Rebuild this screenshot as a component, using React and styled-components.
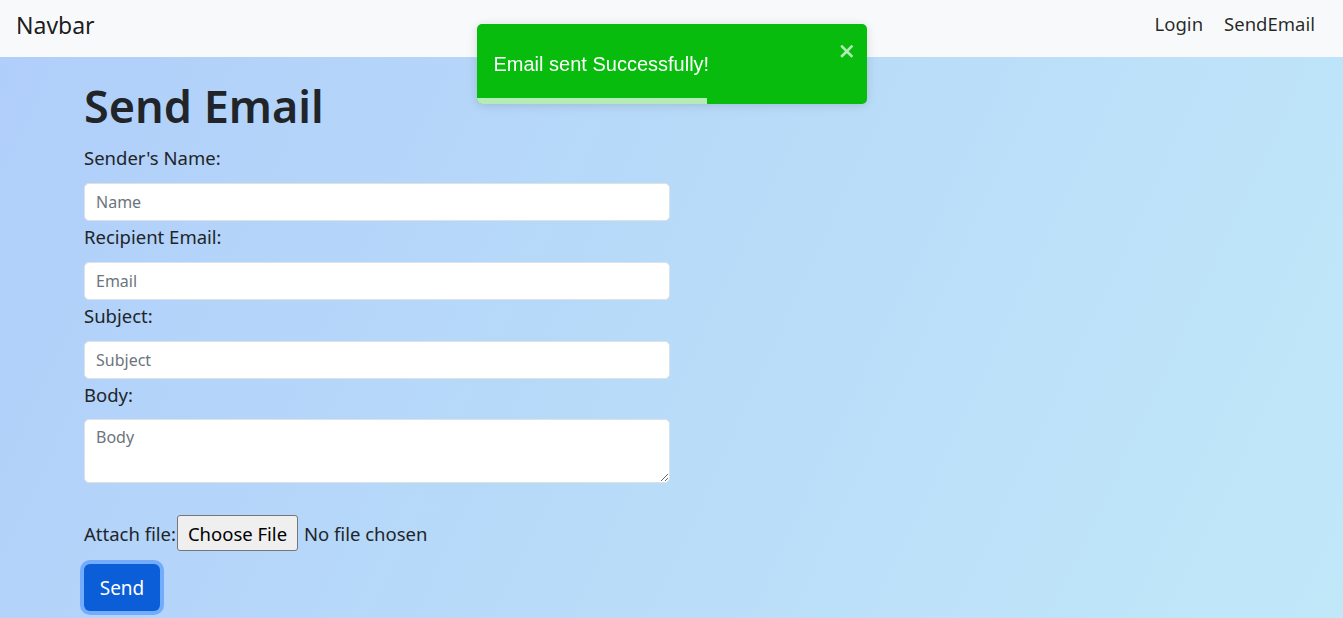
import * as React from 'react';
import styled, { createGlobalStyle } from 'styled-components';

const GlobalStyle = createGlobalStyle`
  html, body {
    margin: 0;
    padding: 0;
  }
  body {
    min-height: 100vh;
    font-family: "Noto Sans", "Open Sans", sans-serif;
    color: #212529;
    background: linear-gradient(115deg, #b0cefa 0%, #b8dbf9 50%, #c1e8f9 100%);
    background-attachment: fixed;
  }
  * {
    box-sizing: border-box;
  }
`;

const Navbar = styled.nav`
  height: 57px;
  display: flex;
  align-items: center;
  justify-content: space-between;
  padding: 0 28px 10px 16px;
  background: #f8f9fa;
`;

const Brand = styled.a`
  font-size: 23px;
  color: rgba(0, 0, 0, 0.9);
  text-decoration: none;
  margin-top: 2px;
`;

const NavLinks = styled.div`
  display: flex;
  gap: 21px;
`;

const NavLink = styled.a`
  font-size: 18.5px;
  color: rgba(0, 0, 0, 0.85);
  text-decoration: none;
`;

const Main = styled.main`
  padding: 21px 0 30px 84px;
`;

const Title = styled.h1`
  margin: 0 0 12px;
  font-size: 45px;
  line-height: 56px;
  font-weight: 600;
  color: #212529;
`;

const Form = styled.form`
  width: 586px;
  display: flex;
  flex-direction: column;
`;

const Label = styled.label`
  display: block;
  font-size: 18.5px;
  line-height: 24px;
  margin-bottom: ${p => (p.$tight ? 12 : 13)}px;
`;

const Input = styled.input`
  display: block;
  width: 100%;
  height: 38px;
  margin-bottom: 4px;
  padding: 0 11px;
  font-family: "Noto Sans", sans-serif;
  font-size: 16px;
  color: #212529;
  background: #fff;
  border: 1px solid #dee2e6;
  border-radius: 5px;
  outline: none;

  &::placeholder {
    color: #6c757d;
  }
`;

const TextArea = styled.textarea`
  display: block;
  width: 100%;
  height: 64px;
  padding: 5px 11px;
  font-family: "Noto Sans", sans-serif;
  font-size: 16px;
  line-height: 24px;
  background: #fff;
  border: 1px solid #dee2e6;
  border-radius: 5px;
  outline: none;
  resize: vertical;

  &::placeholder {
    color: #6c757d;
  }
`;

const FileRow = styled.div`
  display: flex;
  align-items: center;
  margin-top: 32px;
  font-size: 18.5px;
`;

const FileButton = styled.span`
  display: inline-flex;
  align-items: center;
  justify-content: center;
  width: 121px;
  height: 36px;
  margin-left: 1px;
  background: #efefef;
  border: 1px solid #767676;
  border-radius: 3px;
  color: #000;
`;

const FileStatus = styled.span`
  margin-left: 6px;
`;

const SendButton = styled.button`
  align-self: flex-start;
  margin-top: 13px;
  width: 76px;
  height: 47px;
  padding: 0;
  font-family: "Noto Sans", sans-serif;
  font-size: 19px;
  color: #fff;
  background: #0b5ed7;
  border: none;
  border-radius: 6px;
  box-shadow: 0 0 0 4px rgba(49, 132, 253, 0.5);
  cursor: pointer;
`;

const Toast = styled.div`
  position: fixed;
  top: 24px;
  left: 50%;
  transform: translateX(-50%);
  width: 390px;
  height: 80px;
  display: flex;
  padding: 10px;
  background: #07bc0c;
  border-radius: 5px;
  overflow: hidden;
  box-shadow: 0 1px 10px rgba(0, 0, 0, 0.1), 0 2px 15px rgba(0, 0, 0, 0.05);
  font-family: "Liberation Sans", Arial, sans-serif;
`;

const ToastBody = styled.div`
  flex: 1;
  display: flex;
  align-items: center;
  padding-left: 7px;
  font-size: 20px;
  color: #fff;
`;

const CloseButton = styled.button`
  align-self: flex-start;
  margin-top: 7px;
  padding: 0;
  background: transparent;
  border: none;
  color: #fff;
  opacity: 0.7;
  cursor: pointer;
  line-height: 0;
`;

const Progress = styled.div`
  position: absolute;
  left: 0;
  bottom: 0;
  height: 6px;
  background: rgba(255, 255, 255, 0.7);
`;

export default function App() {
  const progress = 230 / 390;
  return (
    <>
      <GlobalStyle />
      <Navbar>
        <Brand href="#">Navbar</Brand>
        <NavLinks>
          <NavLink href="#">Login</NavLink>
          <NavLink href="#">SendEmail</NavLink>
        </NavLinks>
      </Navbar>
      <Main>
        <Title>Send Email</Title>
        <Form onSubmit={e => e.preventDefault()}>
          <Label>Sender's Name:</Label>
          <Input type="text" placeholder="Name" />
          <Label>Recipient Email:</Label>
          <Input type="email" placeholder="Email" />
          <Label>Subject:</Label>
          <Input type="text" placeholder="Subject" />
          <Label $tight>Body:</Label>
          <TextArea placeholder="Body" />
          <FileRow>
            Attach file:
            <FileButton>Choose File</FileButton>
            <FileStatus>No file chosen</FileStatus>
          </FileRow>
          <SendButton type="submit">Send</SendButton>
        </Form>
      </Main>
      <Toast role="alert">
        <ToastBody>Email sent Successfully!</ToastBody>
        <CloseButton aria-label="close">
          <svg width="17.5" height="20" viewBox="0 0 14 16" fill="currentColor">
            <path d="M7.71 8.23l3.75 3.75-1.48 1.48-3.75-3.75-3.75 3.75L1 11.98l3.75-3.75L1 4.48 2.48 3l3.75 3.75L9.98 3l1.48 1.48-3.75 3.75z" />
          </svg>
        </CloseButton>
        <Progress style={{ width: `${progress * 100}%` }} />
      </Toast>
    </>
  );
}
